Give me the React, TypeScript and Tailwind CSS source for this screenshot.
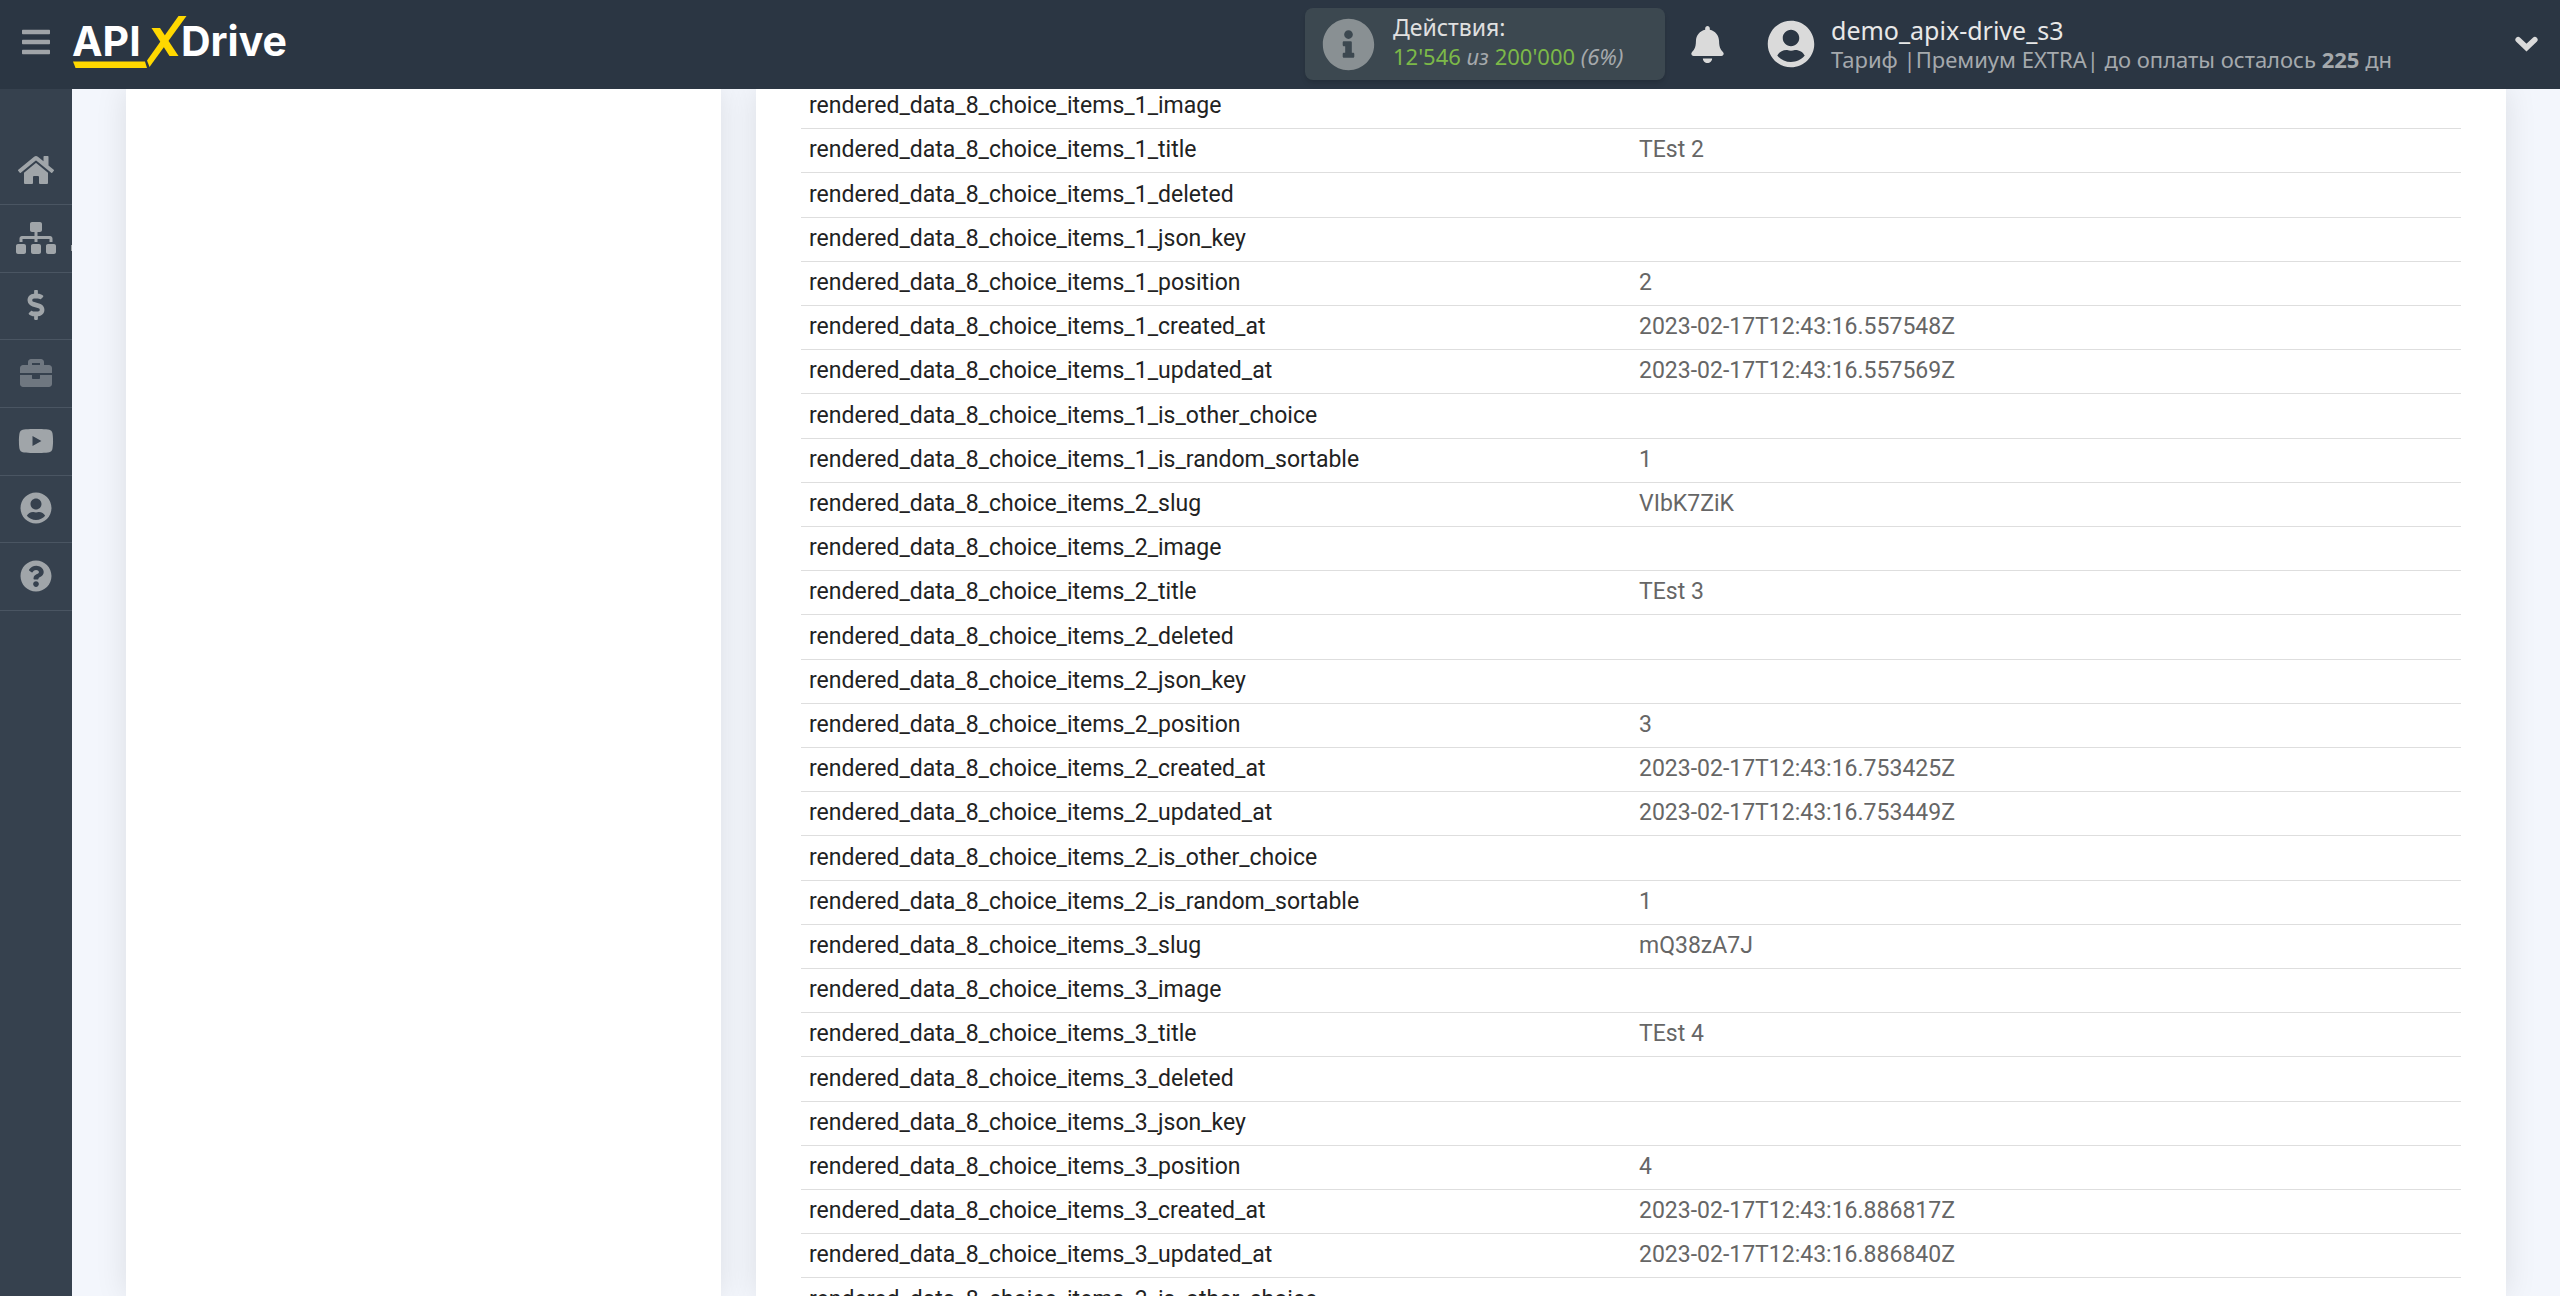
import type { ReactNode } from 'react';
import {
  FaBars,
  FaBell,
  FaBriefcase,
  FaDollarSign,
  FaHome,
  FaInfoCircle,
  FaQuestionCircle,
  FaSitemap,
  FaUserCircle,
  FaYoutube,
} from 'react-icons/fa';

const PREFIX = 'rendered_data_8_choice_items_';

const ROWS: [string, string][] = [
  ['1_image', ''],
  ['1_title', 'TEst 2'],
  ['1_deleted', ''],
  ['1_json_key', ''],
  ['1_position', '2'],
  ['1_created_at', '2023-02-17T12:43:16.557548Z'],
  ['1_updated_at', '2023-02-17T12:43:16.557569Z'],
  ['1_is_other_choice', ''],
  ['1_is_random_sortable', '1'],
  ['2_slug', 'VIbK7ZiK'],
  ['2_image', ''],
  ['2_title', 'TEst 3'],
  ['2_deleted', ''],
  ['2_json_key', ''],
  ['2_position', '3'],
  ['2_created_at', '2023-02-17T12:43:16.753425Z'],
  ['2_updated_at', '2023-02-17T12:43:16.753449Z'],
  ['2_is_other_choice', ''],
  ['2_is_random_sortable', '1'],
  ['3_slug', 'mQ38zA7J'],
  ['3_image', ''],
  ['3_title', 'TEst 4'],
  ['3_deleted', ''],
  ['3_json_key', ''],
  ['3_position', '4'],
  ['3_created_at', '2023-02-17T12:43:16.886817Z'],
  ['3_updated_at', '2023-02-17T12:43:16.886840Z'],
  ['3_is_other_choice', ''],
];

const NAV: { id: string; icon: ReactNode; muted?: boolean; marker?: boolean }[] = [
  { id: 'home', icon: <FaHome className="w-9 h-8" /> },
  { id: 'connections', icon: <FaSitemap className="w-10 h-8" />, marker: true },
  { id: 'billing', icon: <FaDollarSign className="w-8 h-[30px]" /> },
  { id: 'business', icon: <FaBriefcase className="w-8 h-8" />, muted: true },
  { id: 'video', icon: <FaYoutube className="w-9 h-8" /> },
  { id: 'profile', icon: <FaUserCircle className="w-8 h-8" /> },
  { id: 'help', icon: <FaQuestionCircle className="w-8 h-8" /> },
];

function Logo() {
  return (
    <svg width="226" height="56" viewBox="0 0 226 56" role="img" aria-label="APIXDrive">
      <g fill="#fff" fontFamily="Inter, sans-serif" fontWeight="700" fontSize="41">
        <text x="0" y="42">API</text>
        <text x="109" y="42">Drive</text>
      </g>
      <g fill="#ffd800">
        <path d="M1 47.500h72l2 6.500H3.500z" />
        <path d="M79.500 14h8.500l18.500 28h-9z" />
        <path d="M106.500 2h8L77.500 53l-2.500-6.500z" />
      </g>
    </svg>
  );
}

function ChevronDown() {
  return (
    <svg width="23" height="16" viewBox="0 0 23 16" fill="none" stroke="currentColor" className="ml-auto">
      <path d="M3.200 3.700 11.500 11.600 19.800 3.700" strokeWidth="5.600" strokeLinecap="round" />
    </svg>
  );
}

function Header() {
  return (
    <header className="flex items-center h-[89px] pl-5 pr-[22px] pb-px bg-[#2b3643] shrink-0 font-['Noto_Sans',sans-serif]">
      <button aria-label="menu" className="w-8 mr-5 -mt-1 text-[#a0a4a8]">
        <FaBars className="w-8 h-8" />
      </button>
      <a href="#" className="-mt-1">
        <Logo />
      </a>

      <div className="flex items-center gap-[18px] w-[360px] h-[72px] ml-auto pl-[17px] rounded-lg bg-[#3c4850] shadow-md">
        <FaInfoCircle className="w-[53px] h-[53px] text-[#899093]" />
        <div className="-mt-1 whitespace-nowrap">
          <div className="text-[23px] leading-[29px] text-[#e0e0e0]">Действия:</div>
          <div className="text-[22px] leading-[29px] text-[#7cb948]">
            12'546 <i className="text-[#a5a9ac]">из</i> 200'000 <i className="text-[#a5a9ac]">(6%)</i>
          </div>
        </div>
      </div>

      <button aria-label="notifications" className="mx-6 text-[#dadada]">
        <FaBell className="w-[37px] h-[37px]" />
      </button>

      <button className="flex items-center w-[788px] pl-[17px] text-left text-[#dadada]">
        <FaUserCircle className="w-12 h-12 mr-4 shrink-0" />
        <span className="flex flex-col pt-0.5 whitespace-nowrap">
          <span className="text-[25px] leading-[29px] text-[#e8e8e8]">demo_apix-drive_s3</span>
          <span className="text-[22px] leading-[29px] text-[#a5a9ad]">
            Тариф |Премиум EXTRA| до оплаты осталось <b>225</b> дн
          </span>
        </span>
        <ChevronDown />
      </button>
    </header>
  );
}

function Sidebar() {
  return (
    <nav className="w-[72px] pt-12 bg-[#36414e] shrink-0">
      {NAV.map((item) => (
        <a
          key={item.id}
          href="#"
          aria-label={item.id}
          className={`relative flex items-center justify-center h-[68px] nth-[3n]:h-[67px] pb-0.5 border-b border-[#4a5562] ${
            item.muted ? 'text-[#6f7780]' : 'text-[#a0a5a9]'
          }`}
        >
          {item.icon}
          {item.marker && <span className="absolute right-0 top-10 w-px h-1.5 bg-[#a0a5a9]" />}
        </a>
      ))}
    </nav>
  );
}

export default function App() {
  return (
    <div className="flex flex-col h-screen overflow-hidden bg-[#f3f6fc]">
      <Header />
      <div className="flex flex-1 min-h-0">
        <Sidebar />
        <main className="flex flex-1 gap-[35px] px-[54px] overflow-hidden">
          <section className="w-1/4 bg-white shadow-[0_0_30px_rgba(0,0,0,0.1)] shrink-0" />
          <section className="flex-1 px-[45px] bg-white shadow-[0_0_30px_rgba(0,0,0,0.1)]">
            <table className="w-full -mt-[5px] table-fixed border-collapse font-[Roboto,sans-serif] text-[23px] leading-7">
              <tbody>
                {ROWS.map(([key, value]) => (
                  <tr key={key} className="h-11 nth-[5n+3]:h-[45px] border-b border-[#dedede]">
                    <td className="px-2 text-[#222]">{PREFIX + key}</td>
                    <td className="px-2 text-[#666]">{value}</td>
                  </tr>
                ))}
              </tbody>
            </table>
          </section>
        </main>
      </div>
    </div>
  );
}
